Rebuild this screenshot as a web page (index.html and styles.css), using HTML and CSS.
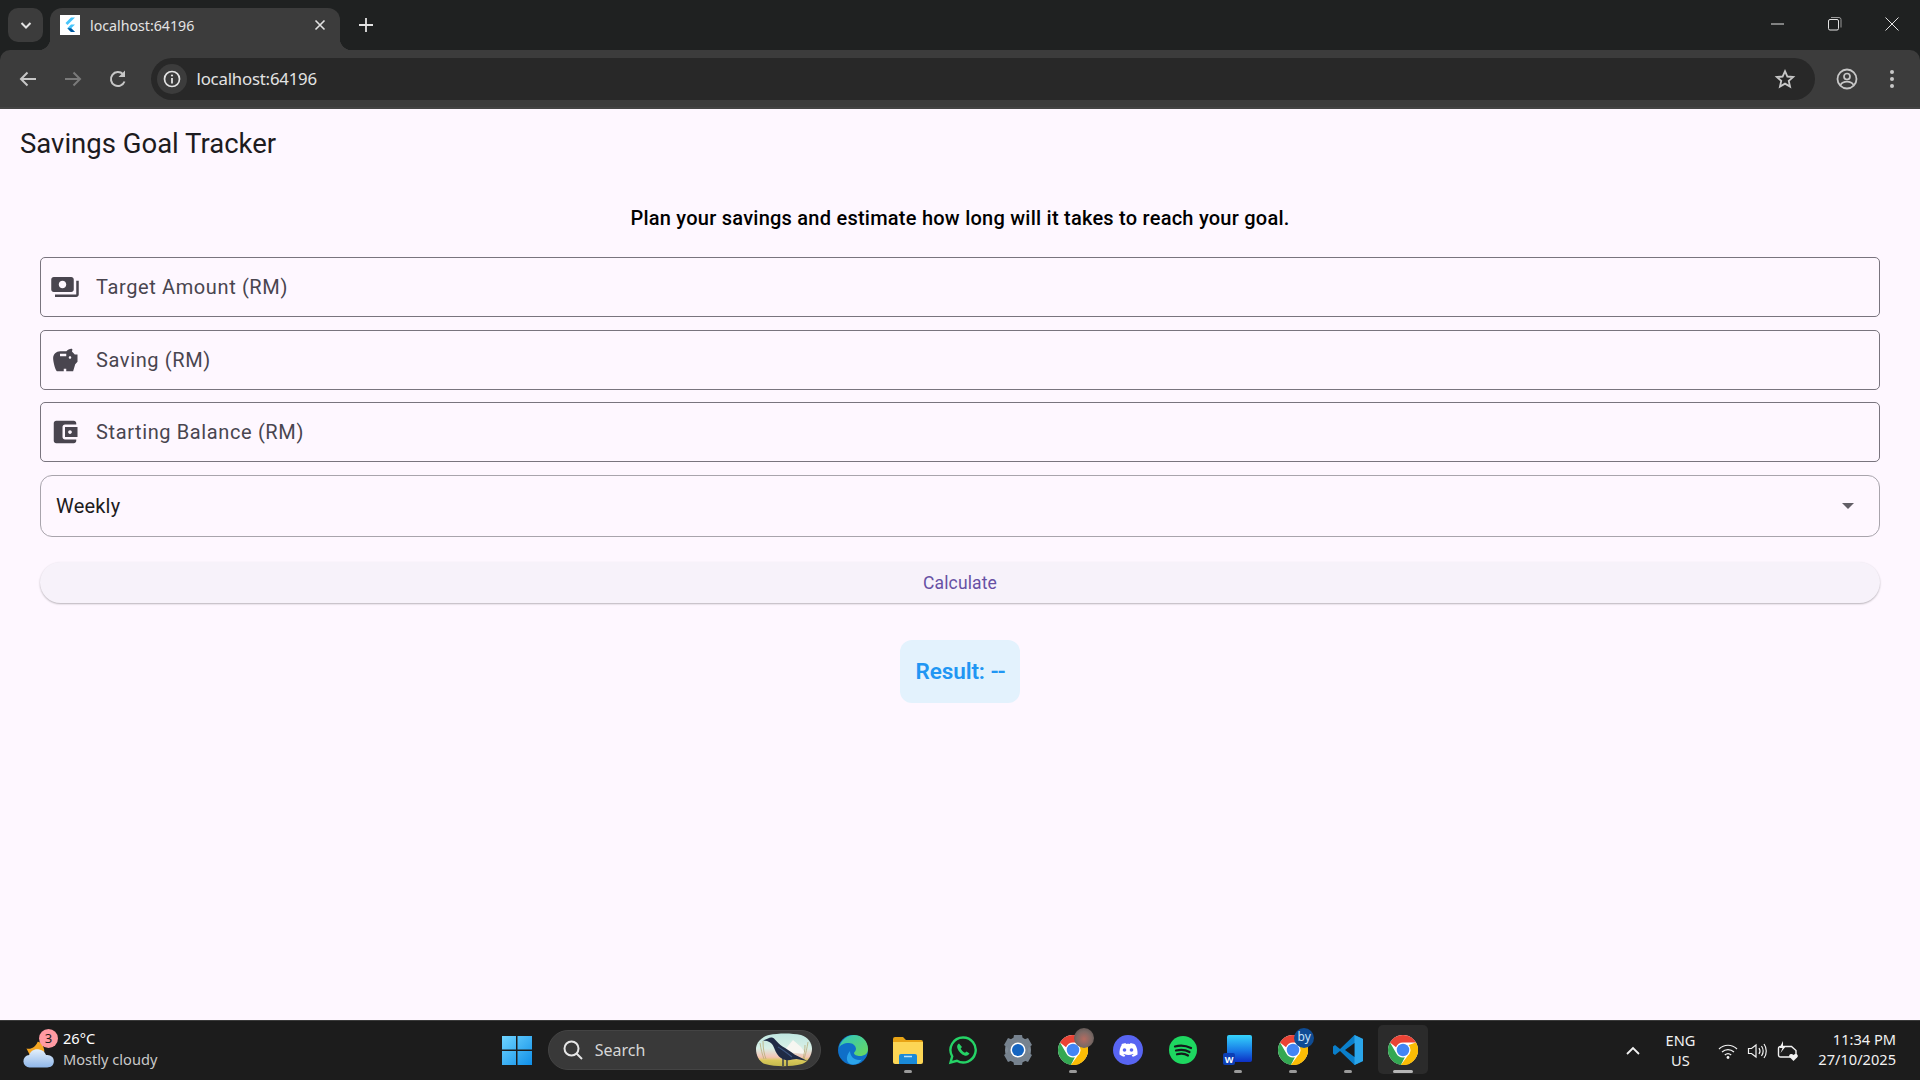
FILE: index.html
```html
<!DOCTYPE html>
<html lang="en">
<head>
<meta charset="utf-8">
<title>Savings Goal Tracker</title>
<link rel="stylesheet" href="styles.css">
</head>
<body>
<div class="screen">
  <header class="browser">
    <div class="tabstrip">
      <button class="tabsearch"><svg width="14" height="14" viewBox="0 0 14 14"><path d="M2.5 5 7 9.5 11.500 5" fill="none" stroke="#e3e3e3" stroke-width="2"/></svg></button>
      <div class="tab">
        <span class="favicon"><svg width="20" height="20" viewBox="0 0 20 20"><path d="M11 2.500h4L7.500 10 5.500 8z" fill="#47c5fb"/><path d="M11 9.500h4l-3.800 3.800 3.800 3.700h-4l-3.700-3.700z" fill="#47c5fb"/><path d="M7.400 13.300 11 17h4l-3.800-3.700z" fill="#00569e"/></svg></span>
        <span class="tabtitle">localhost:64196</span>
        <svg class="tabclose" width="12" height="12" viewBox="0 0 12 12"><path d="M1.500 1.500l9 9M10.500 1.500l-9 9" stroke="#e3e3e3" stroke-width="1.600"/></svg>
      </div>
      <svg class="newtab" width="14" height="14" viewBox="0 0 14 14"><path d="M7 0v14M0 7h14" stroke="#e3e3e3" stroke-width="1.800"/></svg>
      <div class="wincontrols">
        <svg width="14" height="14" viewBox="0 0 14 14"><path d="M0 7h13" stroke="#e3e3e3" stroke-width="1"/></svg>
        <svg width="14" height="14" viewBox="0 0 14 14"><rect x=".5" y="2.500" width="10" height="10.500" rx="1.500" fill="none" stroke="#e3e3e3"/><path d="M3 .5h8a2 2 0 0 1 2 2v8" fill="none" stroke="#9a9a9a"/></svg>
        <svg width="14" height="14" viewBox="0 0 14 14"><path d="M.5.5l13 13M13.500.5l-13 13" stroke="#e3e3e3" stroke-width="1"/></svg>
      </div>
    </div>
    <div class="toolbar">
      <svg class="navicon nav-back" width="24" height="24" viewBox="0 0 24 24"><path d="M20 12H5M11.500 5.500 5 12l6.500 6.500" fill="none" stroke="#c7c7c7" stroke-width="2"/></svg>
      <svg class="navicon nav-forward" width="24" height="24" viewBox="0 0 24 24"><path d="M4 12h15M12.500 5.500 19 12l-6.500 6.500" fill="none" stroke="#7a7a7a" stroke-width="2"/></svg>
      <svg class="navicon nav-reload" width="24" height="24" viewBox="0 0 24 24"><path d="M18.500 14.500A7 7 0 1 1 17 7.200" fill="none" stroke="#c7c7c7" stroke-width="2"/><path d="M19 3.500V10h-6.500z" fill="#c7c7c7"/></svg>
      <div class="omnibox">
        <span class="siteinfo"><svg width="20" height="20" viewBox="0 0 20 20"><circle cx="10" cy="10" r="7.500" fill="none" stroke="#e3e3e3" stroke-width="1.700"/><path d="M10 9v5.500" stroke="#e3e3e3" stroke-width="1.800"/><circle cx="10" cy="6.500" r="1.100" fill="#e3e3e3"/></svg></span>
        <span class="url">localhost:64196</span>
        <svg class="star" width="22" height="22" viewBox="0 0 24 24"><path d="M12 3.500l2.600 5.800 6.300.6-4.800 4.200 1.400 6.200L12 17.100l-5.500 3.200 1.400-6.200L3.100 9.900l6.300-.6z" fill="none" stroke="#c7c7c7" stroke-width="2"/></svg>
      </div>
      <svg class="profile" width="24" height="24" viewBox="0 0 24 24"><circle cx="12" cy="12" r="9.500" fill="none" stroke="#c7c7c7" stroke-width="1.800"/><circle cx="12" cy="9.500" r="3" fill="none" stroke="#c7c7c7" stroke-width="1.700"/><path d="M5.500 18c1.500-2.500 3.800-3.300 6.500-3.300s5 .8 6.500 3.300" fill="none" stroke="#c7c7c7" stroke-width="1.700"/></svg>
      <svg class="menu" width="24" height="24" viewBox="0 0 24 24"><circle cx="12" cy="5" r="2" fill="#c7c7c7"/><circle cx="12" cy="12" r="2" fill="#c7c7c7"/><circle cx="12" cy="19" r="2" fill="#c7c7c7"/></svg>
    </div>
  </header>

  <main class="page">
    <div class="appbar">Savings Goal Tracker</div>
    <section class="content">
      <p class="intro">Plan your savings and estimate how long will it takes to reach your goal.</p>
      <div class="field">
        <svg class="fieldicon" viewBox="0 0 24 24"><path d="M19 14V6c0-1.100-.9-2-2-2H3c-1.100 0-2 .9-2 2v8c0 1.100.9 2 2 2h14c1.100 0 2-.9 2-2zm-9-1c-1.660 0-3-1.340-3-3s1.340-3 3-3 3 1.340 3 3-1.340 3-3 3zm13-6v11c0 1.100-.9 2-2 2H4v-2h17V7h2z"/></svg>
        <span>Target Amount (RM)</span>
      </div>
      <div class="field">
        <svg class="fieldicon" viewBox="0 0 24 24"><path d="M19.830 7.500l-2.270-2.270c.07-.42.18-.81.32-1.150.22-.53-.17-1.080-.74-1.080-1.640 0-3.090.79-4 2h-5C4.960 5 2.500 7.460 2.500 10.500c0 2.330 1.420 8.500 3 10.500H11v-2h2v2h5.500l1.680-5.590L22 13.470V7.500h-2.170zM13 9H8V7h5v2zm3 2c-.55 0-1-.45-1-1s.45-1 1-1 1 .45 1 1-.45 1-1 1z"/></svg>
        <span>Saving (RM)</span>
      </div>
      <div class="field">
        <svg class="fieldicon" viewBox="0 0 24 24"><path d="M21 18v1c0 1.100-.9 2-2 2H5c-1.110 0-2-.9-2-2V5c0-1.100.89-2 2-2h14c1.100 0 2 .9 2 2v1h-9c-1.110 0-2 .9-2 2v8c0 1.100.89 2 2 2h9zm-9-2h10V8H12v8zm4-2.500c-.83 0-1.500-.67-1.500-1.500s.67-1.500 1.500-1.500 1.500.67 1.500 1.500-.67 1.500-1.500 1.500z"/></svg>
        <span>Starting Balance (RM)</span>
      </div>
      <div class="dropdown">
        <span>Weekly</span>
        <span class="caret"></span>
      </div>
      <button class="calc">Calculate</button>
      <div class="result"><span>Result:&nbsp;<span class="dashes">--</span></span></div>
    </section>
  </main>

  <footer class="taskbar">
    <div class="tb-left">
      <div class="weather">
        <svg width="38" height="38" viewBox="1 4 34 34">
          <path d="M5 16c4 1 8-1 10-6 3 0 6 4 6 9L8 22z" fill="#f5a623"/>
          <defs><linearGradient id="cl" x1="0" y1="0" x2="0" y2="1"><stop offset="0" stop-color="#e4f0fb"/><stop offset="1" stop-color="#8fb7ea"/></linearGradient></defs>
          <path d="M8 33a5.500 5.500 0 0 1-.5-11c1-4 5-6 9-5 3 .5 5 2 6 5 3 0 7 1 7 5.500 0 4-3 5.500-6 5.500z" fill="url(#cl)"/>
        </svg>
        <span class="badge">3</span>
      </div>
      <div class="weathertext"><span class="temp">26°C</span><span class="cond">Mostly cloudy</span></div>
    </div>
    <div class="tb-center">
      <div class="tile"><svg width="30" height="30" viewBox="0 0 30 30"><defs><linearGradient id="w1" x1="0" y1="0" x2="1" y2="1"><stop offset="0" stop-color="#6fd4ff"/><stop offset="1" stop-color="#0f8fe8"/></linearGradient></defs><path d="M0 1h14v13.500H0zM15.500 1H30v13.500H15.500zM0 16h14v14H0zM15.500 16H30v14H15.500z" fill="url(#w1)"/></svg></div>
      <div class="search">
        <svg width="22" height="22" viewBox="0 0 22 22"><circle cx="9.500" cy="9.500" r="7" fill="none" stroke="#e6e6e6" stroke-width="2"/><path d="M14.500 14.500 20 20" stroke="#e6e6e6" stroke-width="2"/></svg>
        <span class="searchtext">Search</span>
        <svg class="bird" width="60" height="34" viewBox="0 0 60 34">
          <defs><linearGradient id="sky" x1="0" y1="0" x2="0" y2="1"><stop offset="0" stop-color="#bfe6e0"/><stop offset=".45" stop-color="#d8efe6"/><stop offset=".72" stop-color="#f4c4b4"/><stop offset=".82" stop-color="#d9c95a"/><stop offset="1" stop-color="#c4b94c"/></linearGradient></defs>
          <path d="M15 2c10-2 22-2 32 0 7 2 11 8 11 14s-4 13-10 15c-12 3-26 3-37 0C5 29 2 22 2 16S7 4 15 2z" fill="url(#sky)"/>
          <path d="M29 19l10-12 8 7 5 7z" fill="#f7f6f1"/>
          <path d="M6 10c1 6 2 11 4 16M9 8c0 7 1 13 3 18M54 9c-1 6-2 11-4 17M51 12c0 5-1 10-2 14" fill="none" stroke="#b7ad7a" stroke-width=".8"/>
          <path d="M9 7.500 14 5.500c2-1.500 5-1.500 6.500.5 3 3 5 5.500 8 7.500 4 2 8 5 12 8l13 6.500-11-2-4 .5c-5 1.500-10 .5-13.500-3-3-3-4-7-6-11-1-2-2.500-3-6-4.500z" fill="#1f2a45"/>
          <path d="M24 14c4 2 9 6 14 10" fill="none" stroke="#3d5580" stroke-width="1.200"/>
          <path d="M29 25v8M33 25v8" stroke="#1f2a45" stroke-width="1.300"/>
        </svg>
      </div>
      <div class="tile app"><svg width="30" height="30" viewBox="0 0 30 30"><defs><linearGradient id="e1" x1="0" y1="0" x2="1" y2="1"><stop offset="0" stop-color="#2fc6c0"/><stop offset="1" stop-color="#6ad85c"/></linearGradient></defs><circle cx="15" cy="15" r="15" fill="#0f6fc8"/><path d="M1 13C3 4 10 0 16 0c8 0 14 6 14 14 0 5-4 7-8 7-3 0-6-1-6-3 0-1 2-2 2-4 0-3-3-6-7-6-5 0-9 2-10 5z" fill="url(#e1)"/><path d="M12 16c0 5 4 9 9 9 1 0 2 0 3-.5-2 3-5 5-9 5-7 0-8-8-3-13.500z" fill="#2ba4ea"/></svg></div>
      <div class="tile app"><svg width="30" height="28" viewBox="0 0 30 28"><path d="M0 3a2 2 0 0 1 2-2h8l3 3h15a2 2 0 0 1 2 2v4H0z" fill="#e8a415"/><path d="M0 6h30v20a2 2 0 0 1-2 2H2a2 2 0 0 1-2-2z" fill="#fcd655"/><path d="M6 20a2 2 0 0 1 2-2h14a2 2 0 0 1 2 2v8H6z" fill="#1a8ad8"/><path d="M11 20.500h8" stroke="#b9e2fb" stroke-width="1.500"/></svg><span class="pin"></span></div>
      <div class="tile"><svg width="30" height="30" viewBox="0 0 30 30"><path d="M15 2.500A12.500 12.500 0 0 0 4.200 21.300L2.500 27.500l6.400-1.700A12.500 12.500 0 1 0 15 2.500z" fill="none" stroke="#25d366" stroke-width="2.400"/><path d="M11 8.500c-1.500 1-2.500 2.500-1.500 5 1 3 4 6 7 7 2.500.8 4-.5 5-2l-3-2-1.500 1.300c-2-.8-3.500-2.500-4.300-4.300L14 12z" fill="#25d366"/></svg></div>
      <div class="tile"><svg width="30" height="30" viewBox="0 0 30 30"><path d="M15 15m-13 0a13 13 0 1 0 26 0a13 13 0 1 0-26 0" fill="#7e8a96"/><path d="M11 0h8l1 5 5-2 4 7-4 3v4l4 3-4 7-5-2-1 5h-8l-1-5-5 2-4-7 4-3v-4L1 10l4-7 5 2z" fill="#76828e"/><circle cx="15" cy="15" r="7.500" fill="#fff"/><circle cx="15" cy="15" r="6" fill="#1565c0"/></svg></div>
      <div class="tile app"><svg class="chrome" width="30" height="30" viewBox="0 0 48 48"><use href="#chromeicon"/></svg><span class="overlay photo"></span><span class="pin"></span></div>
      <div class="tile"><svg width="30" height="30" viewBox="0 0 30 30"><circle cx="15" cy="15" r="15" fill="#5865f2"/><path d="M8 9.500c2-1 3.500-1.300 4.500-1.500l.5 1c1.300-.2 2.700-.2 4 0l.5-1c1 .2 2.500.5 4.500 1.500 2 3 2.800 6.300 2.500 10-1.700 1.300-3.300 2-4.800 2.300l-1-1.500 1.800-.9-.5-.4c-3 1.400-6 1.400-9 0l-.5.4 1.800.9-1 1.500c-1.500-.3-3.100-1-4.800-2.300-.3-3.700.5-7 2.500-10z" fill="#fff"/><circle cx="11.500" cy="15" r="1.800" fill="#5865f2"/><circle cx="18.500" cy="15" r="1.800" fill="#5865f2"/></svg></div>
      <div class="tile"><svg width="28" height="28" viewBox="0 0 28 28"><circle cx="14" cy="14" r="14" fill="#1ed760"/><path d="M6 10.500c5-1.500 11-1 16 1.500M7 14.500c4.500-1.200 9.500-.8 13.500 1.500M8 18.300c3.700-1 8-.7 11 1.200" fill="none" stroke="#14191c" stroke-width="2.200" stroke-linecap="round"/></svg></div>
      <div class="tile app"><svg width="30" height="30" viewBox="0 0 30 30"><defs><linearGradient id="wd" x1="0" y1="0" x2="0" y2="1"><stop offset="0" stop-color="#35d3fb"/><stop offset=".55" stop-color="#1a7fe8"/><stop offset="1" stop-color="#0d2fc4"/></linearGradient></defs><rect x="4" y="0" width="25" height="27" rx="2" fill="url(#wd)"/><rect x="0" y="18" width="12" height="12" rx="2" fill="#0c3fb5"/><text class="wordw" x="6" y="27.500">W</text></svg><span class="pin"></span></div>
      <div class="tile app"><svg class="chrome" width="30" height="30" viewBox="0 0 48 48"><use href="#chromeicon"/></svg><span class="overlay by">by</span><span class="pin"></span></div>
      <div class="tile app"><svg width="30" height="30" viewBox="0 0 30 30"><path d="M21.500 0 30 4v22l-8.500 4L7 16l-5 4-2-1.500V11.500L2 10l5 4z" fill="#0a7fcb"/><path d="M21.500 0 30 4v22l-8.500 4z" fill="#2aa5ea"/><path d="M21.500 8 12 15l9.500 7z" fill="#1a1a1a"/></svg><span class="pin"></span></div>
      <div class="tile app active"><svg class="chrome" width="30" height="30" viewBox="0 0 48 48"><use href="#chromeicon"/></svg><span class="pin wide"></span></div>
    </div>
    <div class="tb-right">
      <svg class="traycaret" width="14" height="10" viewBox="0 0 14 10"><path d="M1 8l6-6 6 6" fill="none" stroke="#f2f2f2" stroke-width="1.800"/></svg>
      <div class="lang"><span>ENG</span><span>US</span></div>
      <svg class="trayicon wifi" width="20" height="20" viewBox="0 0 20 20"><path d="M1 8c5-5 13-5 18 0M4 11c3.500-3.300 8.500-3.300 12 0M6.800 14c2-1.800 4.400-1.800 6.400 0" fill="none" stroke="#f2f2f2" stroke-width="1.200"/><circle cx="10" cy="16.500" r="1.400" fill="#f2f2f2"/></svg>
      <svg class="trayicon speaker" width="22" height="20" viewBox="0 0 22 20"><path d="M1.500 7.500h3L9 4v12l-4.500-3.500h-3z" fill="none" stroke="#f2f2f2" stroke-width="1.200"/><path d="M12 7c1.200 1.800 1.200 4.200 0 6M14.500 5c2 3 2 7 0 10M17 3c3 4 3 10 0 14" fill="none" stroke="#f2f2f2" stroke-width="1.200"/></svg>
      <svg class="trayicon battery" width="22" height="22" viewBox="0 0 22 22"><path d="M1.500 8.500a2 2 0 0 1 2-2h11l4.500 4v6.500h-15.500a2 2 0 0 1-2-2z" fill="none" stroke="#f2f2f2" stroke-width="1.400"/><path d="M6 1 2.500 8h3L3.500 13l5.500-7H6z" fill="#f2f2f2"/><path d="M16.500 21l-4-4c-1.500-2 1.800-4.500 4-2 2.200-2.500 5.500 0 4 2z" fill="#f2f2f2"/></svg>
      <div class="clock"><span>11:34 PM</span><span>27/10/2025</span></div>
    </div>
  </footer>
</div>
<svg class="defs" width="0" height="0">
  <defs>
    <g id="chromeicon">
      <circle cx="24" cy="24" r="24" fill="#fff"/>
      <path d="M24 0a24 24 0 0 1 20.800 12H24a12 12 0 0 0-11.200 7.600L3.200 12A24 24 0 0 1 24 0z" fill="#ea4335"/>
      <path d="M3.200 12l10.400 18A12 12 0 0 0 27 35.600L20.600 47.800A24 24 0 0 1 3.200 12z" fill="#34a853"/>
      <path d="M44.800 12A24 24 0 0 1 20.600 47.800L31.200 33.600A12 12 0 0 0 33 16z" fill="#fbbc04"/>
      <circle cx="24" cy="24" r="10" fill="#4285f4"/>
    </g>
  </defs>
</svg>
</body>
</html>
```
FILE: styles.css
```css
* { box-sizing: border-box; }
html, body { margin: 0; height: 100%; overflow: hidden; }
body { font-family: Roboto, "Noto Sans", sans-serif; background: #fef7ff; }
.screen { width: 1920px; height: 1080px; display: flex; flex-direction: column; }
.defs { position: absolute; }

/* browser chrome */
.browser { flex: none; height: 109px; background: #1f2121; display: flex; flex-direction: column; }
.tabstrip { height: 50px; display: flex; align-items: flex-start; padding: 8px 0 0 8px; }
.tabsearch { width: 35px; height: 34px; background: #3c3c3c; border: 0; border-radius: 10px; padding: 0; display: flex; align-items: center; justify-content: center; }
.tab { position: relative; width: 290px; height: 42px; margin-left: 7px; background: #3c3c3c; border-radius: 12px 12px 0 0; display: flex; align-items: center; padding: 0 10px 8px; }
.tab::before, .tab::after { content: ""; position: absolute; bottom: 0; width: 12px; height: 12px; }
.tab::before { left: -12px; background: radial-gradient(circle at 0 0, transparent 12px, #3c3c3c 12.500px); }
.tab::after { right: -12px; background: radial-gradient(circle at 100% 0, transparent 12px, #3c3c3c 12.500px); }
.favicon { width: 20px; height: 20px; background: #fff; display: block; }
.favicon svg { display: block; }
.tabtitle { margin-left: 10px; font: 400 14.200px "Noto Sans", sans-serif; color: #e3e3e3; flex: 1; }
.tabclose { margin-right: 4.500px; }
.newtab { margin: 10px 0 0 19px; }
.wincontrols { margin-left: auto; display: flex; gap: 43px; padding: 9px 21px 0 0; }
.wincontrols svg { display: block; width: 14px; }

.toolbar { height: 59px; background: #3c3c3c; border-radius: 10px 10px 0 0; border-bottom: 2px solid #444; display: flex; align-items: center; padding: 0 0 0 16px; }
.navicon { flex: none; }
.nav-forward { margin-left: 21px; }
.nav-reload { margin-left: 21px; }
.omnibox { margin-left: 20.500px; flex: 1; height: 42px; background: #282828; border-radius: 21px; display: flex; align-items: center; padding: 0 19px 0 6px; }
.siteinfo { width: 30px; height: 30px; border-radius: 50%; background: #3c3c3c; display: flex; align-items: center; justify-content: center; }
.url { margin-left: 10px; font: 400 16.800px "Noto Sans", sans-serif; color: #e3e3e3; flex: 1; letter-spacing: -.2px; }
.star { flex: none; }
.profile { margin-left: 20px; flex: none; }
.menu { margin: 0 16px 0 21px; flex: none; }

/* flutter page */
.page { flex: 1; background: #fef7ff; color: #1d1b20; min-height: 0; }
.appbar { height: 70px; padding: 0 20px; display: flex; align-items: center; font-size: 27.500px; line-height: 70px; }
.content { padding: 0 40px; display: flex; flex-direction: column; align-items: stretch; }
.intro { margin: 14px 0 14px; height: 50px; line-height: 50px; text-align: center; font-size: 20px; font-weight: 500; color: #000; letter-spacing: .24px; }
.field { height: 60px; margin-bottom: 12.500px; border: 1.250px solid #79747e; border-radius: 5px; display: flex; align-items: center; padding-left: 9px; gap: 16px; font-size: 20px; letter-spacing: .62px; color: #49454f; }
.fieldicon { width: 30px; height: 30px; fill: #49454f; flex: none; }
.dropdown { height: 62.500px; border: 1.250px solid #a8a4ac; border-radius: 12px; display: flex; align-items: center; justify-content: space-between; padding: 0 25px 0 15px; font-size: 20px; color: #1d1b20; letter-spacing: .2px; }
.caret { width: 0; height: 0; border-left: 6.500px solid transparent; border-right: 6.500px solid transparent; border-top: 6.500px solid #625f66; }
.calc { margin-top: 25px; height: 41px; border: 0; border-radius: 21px; background: #f7f2fa; color: #6750a4; font: 400 17.500px Roboto, sans-serif; letter-spacing: .12px; box-shadow: 0 1px 2px rgba(0, 0, 0, .28); padding: 0; }
.result { align-self: center; margin-top: 36.500px; width: 120px; height: 63px; background: #e3f2fd; border-radius: 12px; display: flex; align-items: center; justify-content: center; font-size: 22.500px; font-weight: 600; color: #2196f3; letter-spacing: -.1px; }
.dashes { letter-spacing: -1.200px; }

/* taskbar */
.taskbar { flex: none; height: 60px; background: #1c1c1c; border-top: 1px solid #3a3a3a; display: grid; grid-template-columns: 1fr auto 1fr; align-items: center; color: #fff; font-family: "Noto Sans", sans-serif; }
.tb-left { display: flex; align-items: center; padding-left: 22px; }
.weather { position: relative; width: 42px; height: 44px; display: flex; align-items: flex-end; }
.badge { position: absolute; left: 17px; top: 0; width: 19px; height: 19px; border-radius: 50%; background: #ff9aa2; color: #1c1c1c; font-size: 13px; line-height: 19px; text-align: center; }
.weathertext { display: flex; flex-direction: column; font-size: 14.600px; line-height: 21px; margin: -4px 0 0 -1px; }
.cond { color: #c9c9c9; }
.tb-center { display: flex; align-items: center; gap: 5px; margin-top: -2px; }
.tile { position: relative; width: 50px; height: 49px; display: flex; align-items: center; justify-content: center; border-radius: 5px; }
.tile.active { background: #2b2b2b; }
.pin { position: absolute; left: 50%; bottom: 1px; width: 8px; height: 3.500px; margin-left: -4px; background: #9a9a9a; border-radius: 2px; }
.pin.wide { width: 20px; margin-left: -10px; background: #b5b5b5; }
.overlay { position: absolute; border-radius: 50%; }
.photo { left: 26px; top: 3px; width: 20px; height: 20px; background: radial-gradient(circle at 50% 55%, #b56b60 0, #7d6a66 50%, #4a4a48 100%); }
.by { left: 26px; top: 3px; width: 20px; height: 20px; background: #0f4c94; color: #c8e3fb; font-size: 12px; line-height: 18px; text-align: center; }
.wordw { font: 700 9px "Noto Sans", sans-serif; fill: #fff; text-anchor: middle; }
.search { width: 273px; height: 40px; margin: 0 2.500px 0 1px; background: #393939; border: 1px solid #444; border-radius: 20px; display: flex; align-items: center; padding: 0 6px 0 13px; }
.searchtext { margin-left: 11px; font-size: 16px; color: #d6d6d6; flex: 1; }
.bird { flex: none; }
.tb-right { display: flex; align-items: center; justify-content: flex-end; padding-right: 24px; margin-top: -3px; color: #f2f2f2; font-size: 14.600px; line-height: 20px; }
.traycaret { margin-right: 26px; margin-top: 3px; }
.lang { display: flex; flex-direction: column; align-items: center; margin-right: 23px; margin-top: 1px; }
.trayicon { margin-top: 3px; }
.wifi { margin-right: 9px; }
.speaker { margin-right: 8px; }
.clock { display: flex; flex-direction: column; align-items: flex-end; margin-left: 19px; }
```
